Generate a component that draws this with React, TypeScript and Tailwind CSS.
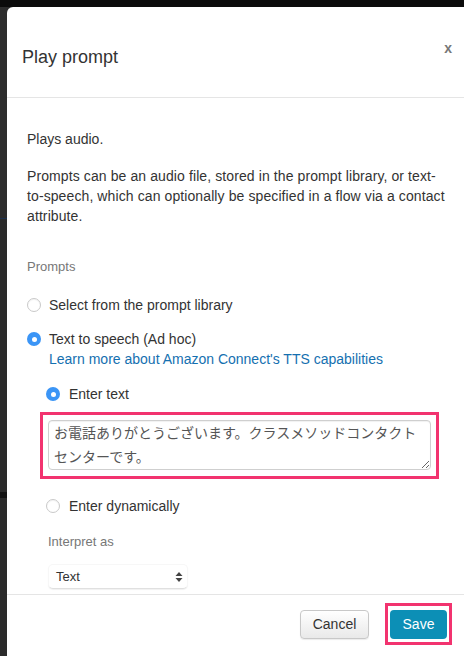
import React from "react";

function Radio({ checked }: { checked?: boolean }) {
  if (checked) {
    return (
      <span className="flex h-[14px] w-[14px] shrink-0 items-center justify-center rounded-full bg-[#3b95f6]">
        <span className="h-[5px] w-[5px] rounded-full bg-white" />
      </span>
    );
  }
  return (
    <span className="h-[14px] w-[14px] shrink-0 rounded-full border border-[#c9c9c9] bg-white shadow-[inset_0_1px_1px_rgba(0,0,0,0.05)]" />
  );
}

export default function App() {
  return (
    <div className="flex h-[656px] w-[464px] flex-col overflow-hidden bg-[#2b2b2b] font-['Liberation_Sans','Noto_Sans_CJK_JP',sans-serif] text-[#333]">
      <div className="h-[7px] shrink-0 bg-[#0b0b0b]" />
      <div className="flex min-h-0 flex-1">
        <div className="flex w-[7px] shrink-0 flex-col">
          <div className="h-[211px] bg-[#2d2d2d]" />
          <div className="h-[1px] bg-[#1d3250]" />
          <div className="h-[273px] bg-[#2b2b2b]" />
          <div className="h-[6px] bg-[#141414]" />
          <div className="flex-1 bg-[#2b2b2b]" />
        </div>
        <div className="flex min-w-0 flex-1 flex-col overflow-hidden rounded-tl-[6px] bg-white">
          {/* Header */}
          <div className="relative h-[91px] shrink-0 border-b border-[#e5e5e5]">
            <h1 className="pl-[15px] pt-[38px] text-[18px] leading-[24px] text-[#333]">Play prompt</h1>
            <span className="absolute right-[12px] top-[32px] text-[14px] font-bold leading-[18px] text-[#777]">x</span>
          </div>

          {/* Body */}
          <div className="min-h-0 flex-1 overflow-hidden pl-[20px] pr-[10px] pt-[31px] text-[14px] leading-[20px]">
            <p>Plays audio.</p>
            <p className="mt-[17px] w-[424px] tracking-[0.1px]">
              Prompts can be an audio file, stored in the prompt library, or text-to-speech, which can optionally be specified in a flow via a contact attribute.
            </p>
            <div className="mt-[32px] text-[13px] leading-[18px] text-[#777]">Prompts</div>

            <div className="mt-[19px] flex items-center gap-[8px]">
              <Radio />
              <span>Select from the prompt library</span>
            </div>
            <div className="mt-[14px] flex items-center gap-[8px]">
              <Radio checked />
              <span>Text to speech (Ad hoc)</span>
            </div>
            <div className="pl-[22px] text-[#1570b0]">Learn more about Amazon Connect's TTS capabilities</div>

            <div className="ml-[19px] mt-[15px] flex items-center gap-[9px]">
              <Radio checked />
              <span>Enter text</span>
            </div>

            <div className="ml-[13px] mt-[8px] w-[399px] border-[3px] border-[#f2336f] px-[5px] pb-[6px] pt-[5px]">
              <textarea
                readOnly
                value="お電話ありがとうございます。クラスメソッドコンタクトセンターです。"
                className="block h-[50px] w-full overflow-hidden rounded-[4px] border border-[#cfcfcf] bg-white px-[5px] pt-[0px] text-[14px] leading-[24px] text-[#555] shadow-[inset_0_1px_1px_rgba(0,0,0,0.06)] outline-none"
              />
            </div>

            <div className="ml-[19px] mt-[17px] flex items-center gap-[9px]">
              <Radio />
              <span>Enter dynamically</span>
            </div>

            <div className="ml-[21px] mt-[17px] text-[13px] leading-[18px] text-[#777]">Interpret as</div>

            <div className="ml-[21px] mt-[13px] flex h-[25px] w-[140px] items-center justify-between rounded-[5px] border border-[#f7f7f7] border-b-[#e0e0e0] bg-white pl-[7px] pr-[4px] text-[13px] shadow-[0_1px_1px_rgba(0,0,0,0.06)]">
              <span>Text</span>
              <svg width="8" height="12" viewBox="0 0 8 12">
                <path d="M4 1 L7.5 5 H0.5 Z" fill="#444" />
                <path d="M4 11 L7.5 7 H0.5 Z" fill="#444" />
              </svg>
            </div>
          </div>

          {/* Footer */}
          <div className="flex h-[62px] shrink-0 items-start justify-end border-t border-[#e5e5e5] pr-[12px] pt-[8px]">
            <button className="mt-[7px] h-[29px] w-[69px] rounded-[4px] border border-[#c8c8c8] bg-gradient-to-b from-white to-[#e9e9e9] text-[14px] text-[#333] shadow-[0_1px_1px_rgba(0,0,0,0.08)]">
              Cancel
            </button>
            <div className="ml-[16px] border-[3px] border-[#f2336f] px-[2px] pb-[3px] pt-[4px]">
              <button className="h-[29px] w-[57px] rounded-[4px] bg-[#0c8fb6] text-[14px] text-white">Save</button>
            </div>
          </div>
        </div>
      </div>
    </div>
  );
}
